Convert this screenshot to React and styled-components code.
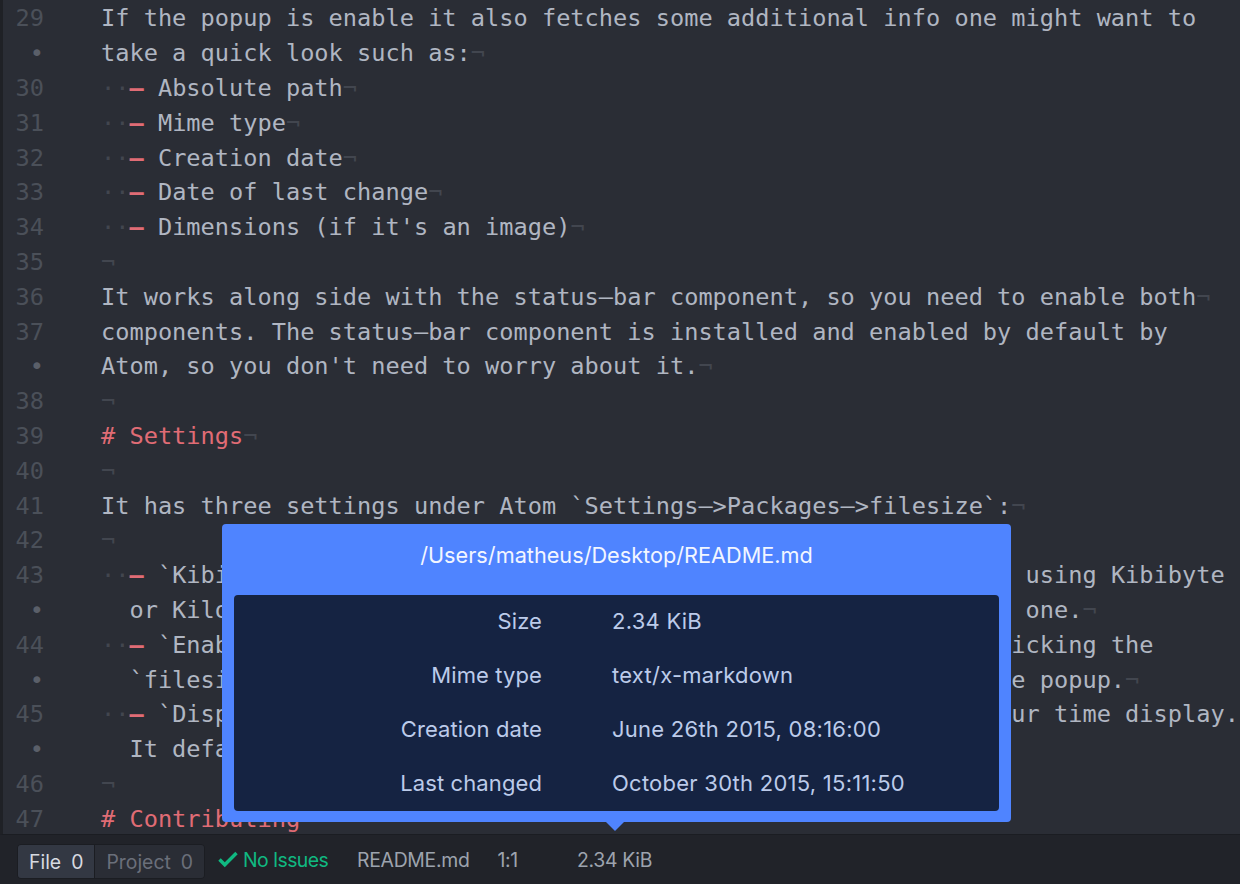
import React from "react";
import styled, { createGlobalStyle } from "styled-components";

const GlobalStyle = createGlobalStyle`
  html, body { margin: 0; padding: 0; background: #2a2d35; }
  body { width: 1240px; height: 884px; overflow: hidden; }
`;

const Window = styled.div`
  width: 1240px;
  height: 884px;
  display: flex;
  flex-direction: column;
  overflow: hidden;
`;

const Editor = styled.div`
  position: relative;
  height: 835px;
  flex: none;
  background: #2a2d35;
  border-left: 3px solid #1f2126;
  border-bottom: 1px solid #1b1d22;
  box-sizing: border-box;
  padding-top: 1.4px;
  overflow: hidden;
`;

const Row = styled.div`
  display: flex;
  height: 34.8px;
  line-height: 34.8px;
  font-family: "DejaVu Sans Mono", monospace;
  font-size: 23.64px;
  white-space: pre;
`;

const LineNo = styled.div`
  width: 41px;
  flex: none;
  text-align: right;
  color: ${(p) => (p.$wrap ? "#5a5f69" : "#4b5059")};
  margin-right: 57px;
`;

const Code = styled.div`
  color: ${(p) => (p.$heading ? "#e06c75" : "#b0b6c2")};
`;

const Invisible = styled.span`
  color: #42464f;
`;

const Dash = styled.span`
  color: #e06c75;
  font-weight: 700;
`;

const Popup = styled.div`
  position: absolute;
  left: 219px;
  top: 524px;
  width: 789px;
  height: 298px;
  box-sizing: border-box;
  padding: 0 12px 12px;
  display: flex;
  flex-direction: column;
  background: #4f84ff;
  border-radius: 4px;
  font-family: Inter, "Liberation Sans", sans-serif;

  &::after {
    content: "";
    position: absolute;
    left: 384px;
    bottom: -9px;
    border-left: 9px solid transparent;
    border-right: 9px solid transparent;
    border-top: 9px solid #4f84ff;
  }
`;

const PopupTitle = styled.div`
  height: 71px;
  flex: none;
  box-sizing: border-box;
  padding-bottom: 10px;
  display: flex;
  align-items: center;
  justify-content: center;
  color: #f2f6ff;
  font-size: 21.7px;
`;

const InfoTable = styled.div`
  flex: 1;
  display: grid;
  grid-template-columns: 308px 1fr;
  grid-auto-rows: 54px;
  column-gap: 70px;
  background: #152342;
  border-radius: 4px;
  color: #bccbea;
  font-size: 22px;
`;

const InfoLabel = styled.div`
  line-height: 52px;
  text-align: right;
  letter-spacing: 0.1px;
`;

const InfoValue = styled.div`
  line-height: 52px;
  letter-spacing: 0.25px;
`;

const StatusBar = styled.div`
  flex: 1;
  display: flex;
  align-items: center;
  padding-left: 17px;
  background: #212329;
  color: #9da3ae;
  font-family: Inter, "Liberation Sans", sans-serif;
  font-size: 19.4px;
`;

const TabGroup = styled.div`
  display: flex;
  height: 35px;
  margin-top: 4px;
  border: 1px solid #1b1d22;
  border-radius: 4px;
  overflow: hidden;
  box-sizing: border-box;
`;

const Tab = styled.div`
  display: flex;
  align-items: center;
  gap: 10px;
  padding: 0 11px;
  background: ${(p) => (p.$active ? "#333843" : "#2a2d35")};
  color: ${(p) => (p.$active ? "#d7dae0" : "#6a6f7a")};
  border-right: ${(p) => (p.$active ? "1px solid #1b1d22" : "none")};
`;

const Check = styled.svg`
  width: 20px;
  height: 17px;
  margin-left: 13px;
  fill: #10b981;
`;

const Issues = styled.span`
  margin-left: 5px;
  color: #10b981;
  letter-spacing: -0.6px;
`;

const StatusText = styled.span`
  margin-left: ${(p) => p.$gap}px;
  letter-spacing: -0.3px;
`;

// text that is covered by the popup is left out, only what shows is placed
const around = (left, col, right) => left.padEnd(col) + right;

const rows = [
  { n: "29", text: "If the popup is enable it also fetches some additional info one might want to" },
  { n: "•", text: "take a quick look such as:", eol: true },
  { n: "30", item: true, text: "Absolute path", eol: true },
  { n: "31", item: true, text: "Mime type", eol: true },
  { n: "32", item: true, text: "Creation date", eol: true },
  { n: "33", item: true, text: "Date of last change", eol: true },
  { n: "34", item: true, text: "Dimensions (if it's an image)", eol: true },
  { n: "35", text: "", eol: true },
  { n: "36", text: "It works along side with the status–bar component, so you need to enable both", eol: true },
  { n: "37", text: "components. The status–bar component is installed and enabled by default by" },
  { n: "•", text: "Atom, so you don't need to worry about it.", eol: true },
  { n: "38", text: "", eol: true },
  { n: "39", heading: true, text: "# Settings", eol: true },
  { n: "40", text: "", eol: true },
  { n: "41", text: "It has three settings under Atom `Settings–>Packages–>filesize`:", eol: true },
  { n: "42", text: "", eol: true },
  { n: "43", item: true, text: around("`Kibi", 61, "using Kibibyte") },
  { n: "•", text: around("  or Kilo", 65, "one."), eol: true },
  { n: "44", item: true, text: around("`Enab", 60, "icking the") },
  { n: "•", text: around("  `filesi", 64, "e popup."), eol: true },
  { n: "45", item: true, text: around("`Disp", 60, "ur time display.") },
  { n: "•", text: "  It defa" },
  { n: "46", text: "", eol: true },
  { n: "47", heading: true, text: "# Contributing" },
];

const info = [
  ["Size", "2.34 KiB"],
  ["Mime type", "text/x-markdown"],
  ["Creation date", "June 26th 2015, 08:16:00"],
  ["Last changed", "October 30th 2015, 15:11:50"],
];

export default function App() {
  return (
    <Window>
      <GlobalStyle />
      <Editor>
        {rows.map((row, index) => (
          <Row key={index}>
            <LineNo $wrap={row.n === "•"}>{row.n}</LineNo>
            <Code $heading={row.heading}>
              {row.item && <Invisible>··</Invisible>}
              {row.item && <Dash>– </Dash>}
              {row.text}
              {row.eol && <Invisible>¬</Invisible>}
            </Code>
          </Row>
        ))}
        <Popup>
          <PopupTitle>/Users/matheus/Desktop/README.md</PopupTitle>
          <InfoTable>
            {info.map(([label, value]) => (
              <React.Fragment key={label}>
                <InfoLabel>{label}</InfoLabel>
                <InfoValue>{value}</InfoValue>
              </React.Fragment>
            ))}
          </InfoTable>
        </Popup>
      </Editor>
      <StatusBar>
        <TabGroup>
          <Tab $active>File <span>0</span></Tab>
          <Tab>Project <span>0</span></Tab>
        </TabGroup>
        <Check viewBox="0 3 12 10.5">
          <path fillRule="evenodd" d="M12 5l-8 8-4-4 1.5-1.5L4 10l6.5-6.5L12 5z" />
        </Check>
        <Issues>No Issues</Issues>
        <StatusText $gap={29}>README.md</StatusText>
        <StatusText $gap={28}>1:1</StatusText>
        <StatusText $gap={59}>2.34 KiB</StatusText>
      </StatusBar>
    </Window>
  );
}
